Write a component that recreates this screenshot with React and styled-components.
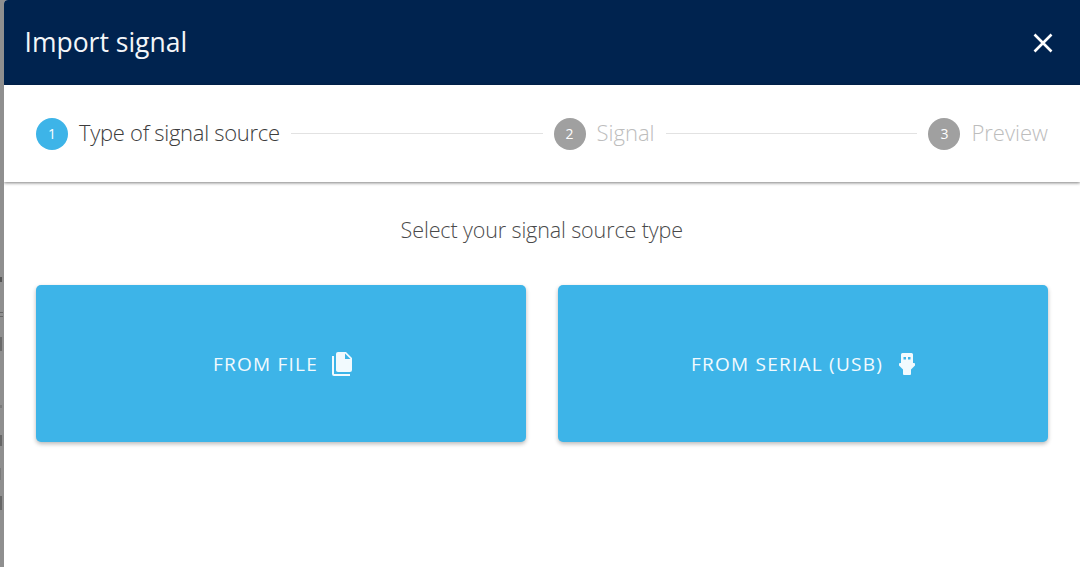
import React from "react";
import styled, { createGlobalStyle } from "styled-components";

const Global = createGlobalStyle`
  html, body { margin: 0; height: 100%; overflow: hidden; background: #8f8f8f; }
  #root { height: 100%; }
`;
const Page = styled.div`
  width: 1080px; height: 567px; display: flex; background: #8f8f8f; overflow: hidden;
  font-family: "Open Sans", "Noto Sans", sans-serif;
`;
const Backdrop = styled.div`
  width: 3.500px; flex: none; display: flex; flex-direction: column; align-items: flex-start;
`;
const BackdropMark = styled.i`
  display: block; width: ${p => p.$w}px; height: ${p => p.$h}px; margin-top: ${p => p.$gap}px;
  background: ${p => p.$color};
`;
const Dialog = styled.div`
  flex: 1; display: flex; flex-direction: column; background: #fff;
  border-top-left-radius: 4px; overflow: hidden;
`;
const Header = styled.header`
  height: 85px; flex: none; background: #00234f; color: #fff; display: flex;
  align-items: center; justify-content: space-between; padding: 0 25px 0 21px; box-sizing: border-box;
`;
const Title = styled.h1`
  margin: 0; font-size: 26.500px; font-weight: 400; line-height: 1; color: #f4f6f9;
`;
const CloseBtn = styled.button`
  border: 0; background: none; padding: 0; width: 24px; height: 24px; color: #fff; display: flex;
`;
const Stepper = styled.nav`
  height: 97px; flex: none; box-sizing: border-box; padding: 0 32px 0 32.500px; display: flex; align-items: center;
  box-shadow: 0 1px 3px rgba(0,0,0,.5); position: relative; background: #fff;
`;
const Step = styled.div`display: flex; align-items: center; gap: 11px; flex: none;`;
const Dot = styled.span`
  width: 32px; height: 32px; border-radius: 50%; display: flex; align-items: center; justify-content: center;
  background: ${p => (p.$active ? "#3db4e8" : "#a0a0a0")}; color: #fff; font-size: 14px; font-weight: 400;
`;
const StepLabel = styled.span`
  font-size: 22px; font-weight: 300; color: ${p => (p.$active ? "#3d3d3d" : "#bdbdbd")};
  letter-spacing: ${p => (p.$active ? "-.3px" : "0")};
  position: relative; top: -2px;
`;
const Line = styled.span`flex: 1; height: 1px; background: #e2e2e2; margin: 0 11px;`;
const Body = styled.main`flex: 1; padding: 33px 32.500px 0 32.500px; display: flex; flex-direction: column; align-items: stretch;`;
const Prompt = styled.p`
  margin: 0 0 40px; text-align: center; font-size: 21.500px; line-height: 30px; font-weight: 300; color: #4a4a4a; letter-spacing: -.12px;
`;
const Choices = styled.div`display: grid; grid-template-columns: 490px 490px; justify-content: space-between;`;
const Choice = styled.button`
  height: 157px; border: 0; border-radius: 5px; background: #3db4e8; color: #f2fafe;
  box-shadow: 0 2px 4px rgba(0,0,0,.28); display: flex; align-items: center; justify-content: center; gap: 12px;
  font-family: inherit; font-size: 19px; font-weight: 400; letter-spacing: 1.250px; padding: 0 0 0 5px;
`;

const FileIcon = () => (
  <svg width="24" height="24" viewBox="0 0 24 24" fill="currentColor" aria-hidden="true">
    <path d="M15,7H20.5L15,1.5V7M8,0H16L22,6V18A2,2 0 0,1 20,20H8C6.89,20 6,19.1 6,18V2A2,2 0 0,1 8,0M4,4V22H20V24H4A2,2 0 0,1 2,22V4H4Z" />
  </svg>
);
const UsbIcon = () => (
  <svg width="24" height="24" viewBox="0 0 24 24" fill="currentColor" aria-hidden="true">
    <path fillRule="evenodd" d="M6 2.500A1.500 1.500 0 0 1 7.500 1h9A1.500 1.500 0 0 1 18 2.500V11h1a1 1 0 0 1 1 1v1.500l-4 4V22a1 1 0 0 1-1 1H9a1 1 0 0 1-1-1v-4.500l-4-4V12a1 1 0 0 1 1-1h1V2.500ZM8.500 5v2.500h2.500V5H8.500Zm4.500 0v2.500h2.500V5H13Z" />
  </svg>
);

const marks = [
  { gap: 277, w: 1.5, h: 5, color: "#555" },
  { gap: 30, w: 2.5, h: 1, color: "#666" },
  { gap: 3, w: 2.5, h: 1, color: "#666" },
  { gap: 20, w: 1.5, h: 14, color: "#6a6a6a" },
  { gap: 54, w: 1.5, h: 3, color: "#7a7a7a" },
  { gap: 27, w: 2, h: 11, color: "#666" },
  { gap: 22, w: 1, h: 12, color: "#7a7a7a" },
  { gap: 16, w: 2, h: 14, color: "#666" },
];

export default function App() {
  return (
    <Page>
      <Global />
      <Backdrop aria-hidden="true">
        {marks.map((m, i) => <BackdropMark key={i} $gap={m.gap} $w={m.w} $h={m.h} $color={m.color} />)}
      </Backdrop>
      <Dialog>
        <Header>
          <Title>Import signal</Title>
          <CloseBtn aria-label="Close">
            <svg width="24" height="24" viewBox="0 0 24 24" fill="none" stroke="currentColor" strokeWidth="2.600"><path d="M3.500 3.500l17 17M20.500 3.500l-17 17" /></svg>
          </CloseBtn>
        </Header>
        <Stepper>
          <Step><Dot $active>1</Dot><StepLabel $active>Type of signal source</StepLabel></Step>
          <Line />
          <Step><Dot>2</Dot><StepLabel>Signal</StepLabel></Step>
          <Line />
          <Step><Dot>3</Dot><StepLabel>Preview</StepLabel></Step>
        </Stepper>
        <Body>
          <Prompt>Select your signal source type</Prompt>
          <Choices>
            <Choice>FROM FILE <FileIcon /></Choice>
            <Choice>FROM SERIAL (USB) <UsbIcon /></Choice>
          </Choices>
        </Body>
      </Dialog>
    </Page>
  );
}
